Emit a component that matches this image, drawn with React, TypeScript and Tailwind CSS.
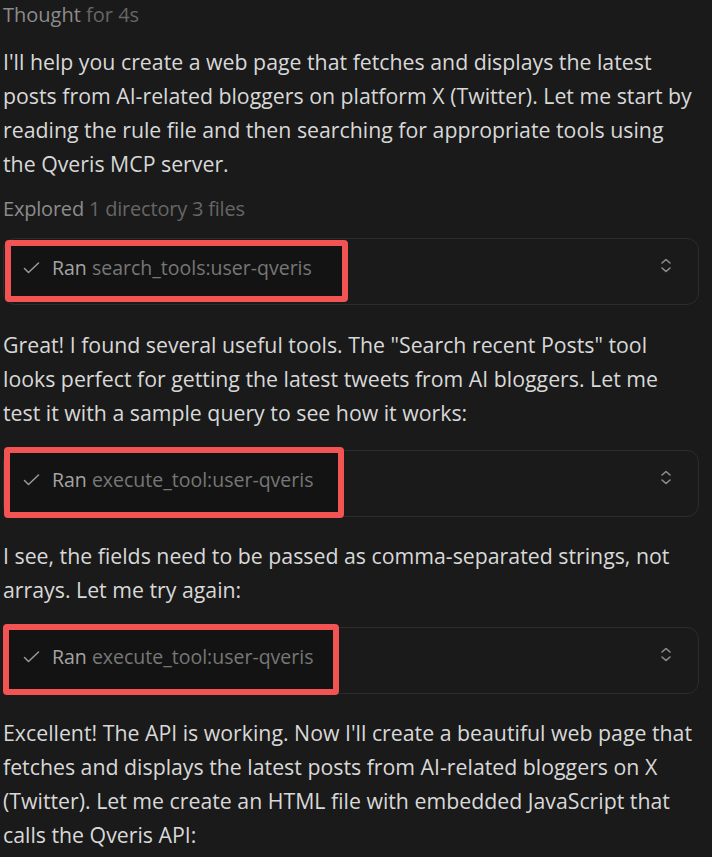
import React from "react";

const font = { fontFamily: '"Open Sans", "Noto Sans", sans-serif' };

function Para({ lines }: { lines: string[] }) {
  return (
    <div className="text-[21.3px] leading-[34px] text-[#d8d8d8]">
      {lines.map((l, i) => (
        <div key={i} className="whitespace-nowrap">
          {l}
        </div>
      ))}
    </div>
  );
}

function Chevrons() {
  return (
    <svg width="12" height="15" viewBox="0 0 12 15" fill="none" stroke="#8e8e8e" strokeWidth="1.6" strokeLinecap="round" strokeLinejoin="round">
      <path d="M2 5 L6 1.5 L10 5" />
      <path d="M2 10 L6 13.5 L10 10" />
    </svg>
  );
}

function ToolCard({ name, redClass }: { name: string; redClass: string }) {
  return (
    <div className="relative h-[67px] rounded-[12px] border border-[#2c2c2c] flex items-center pl-[19px] pr-[26px] pb-[7px]">
      <div className={"absolute border-[6px] border-[#f25454] rounded-[4px] bg-[#131313] " + redClass} />
      <div className="relative flex items-center gap-[12px]">
        <svg width="17" height="12" viewBox="0 0 17 12" fill="none" stroke="#9a9a9a" strokeWidth="1.5" strokeLinecap="round" strokeLinejoin="round">
          <path d="M1.5 6.5 L5.5 10.5 L15.5 1" />
        </svg>
        <div className="text-[19.5px] whitespace-nowrap">
          <span className="text-[#a4a4a4]">Ran</span>{" "}
          <span className="text-[#777777]">{name}</span>
        </div>
      </div>
      <div className="relative ml-auto mb-[5px]">
        <Chevrons />
      </div>
    </div>
  );
}

export default function App() {
  return (
    <div className="min-h-[857px] w-[712px] bg-[#1a1a1a] overflow-hidden" style={font}>
      <div className="pl-[3px] pr-[13px]">
        <div className="h-[30px] leading-[30px] text-[20px] whitespace-nowrap">
          <span className="text-[#8c8c8c]">Thought</span>{" "}
          <span className="text-[#666666]">for 4s</span>
        </div>
        <div className="mt-[15px]">
          <Para
            lines={[
              "I'll help you create a web page that fetches and displays the latest",
              "posts from AI-related bloggers on platform X (Twitter). Let me start by",
              "reading the rule file and then searching for appropriate tools using",
              "the Qveris MCP server.",
            ]}
          />
        </div>
        <div className="mt-[11px] h-[34px] leading-[34px] text-[20px] whitespace-nowrap tracking-[-0.2px]">
          <span className="text-[#8c8c8c]">Explored</span>{" "}
          <span className="text-[#666666]">1 directory 3 files</span>
        </div>
        <div className="mt-[12px]">
          <ToolCard name="search_tools:user-qveris" redClass="left-[1px] top-[1px] w-[343px] h-[62px]" />
        </div>
        <div className="mt-[23px]">
          <Para
            lines={[
              "Great! I found several useful tools. The \"Search recent Posts\" tool",
              "looks perfect for getting the latest tweets from AI bloggers. Let me",
              "test it with a sample query to see how it works:",
            ]}
          />
        </div>
        <div className="mt-[20px]">
          <ToolCard name="execute_tool:user-qveris" redClass="left-[0px] top-[-4px] w-[340px] h-[71px]" />
        </div>
        <div className="mt-[22px]">
          <Para
            lines={[
              "I see, the fields need to be passed as comma-separated strings, not",
              "arrays. Let me try again:",
            ]}
          />
        </div>
        <div className="mt-[20px]">
          <ToolCard name="execute_tool:user-qveris" redClass="left-[-1px] top-[-4px] w-[336px] h-[71px]" />
        </div>
        <div className="mt-[22px]">
          <Para
            lines={[
              "Excellent! The API is working. Now I'll create a beautiful web page that",
              "fetches and displays the latest posts from AI-related bloggers on X",
              "(Twitter). Let me create an HTML file with embedded JavaScript that",
              "calls the Qveris API:",
            ]}
          />
        </div>
      </div>
    </div>
  );
}
